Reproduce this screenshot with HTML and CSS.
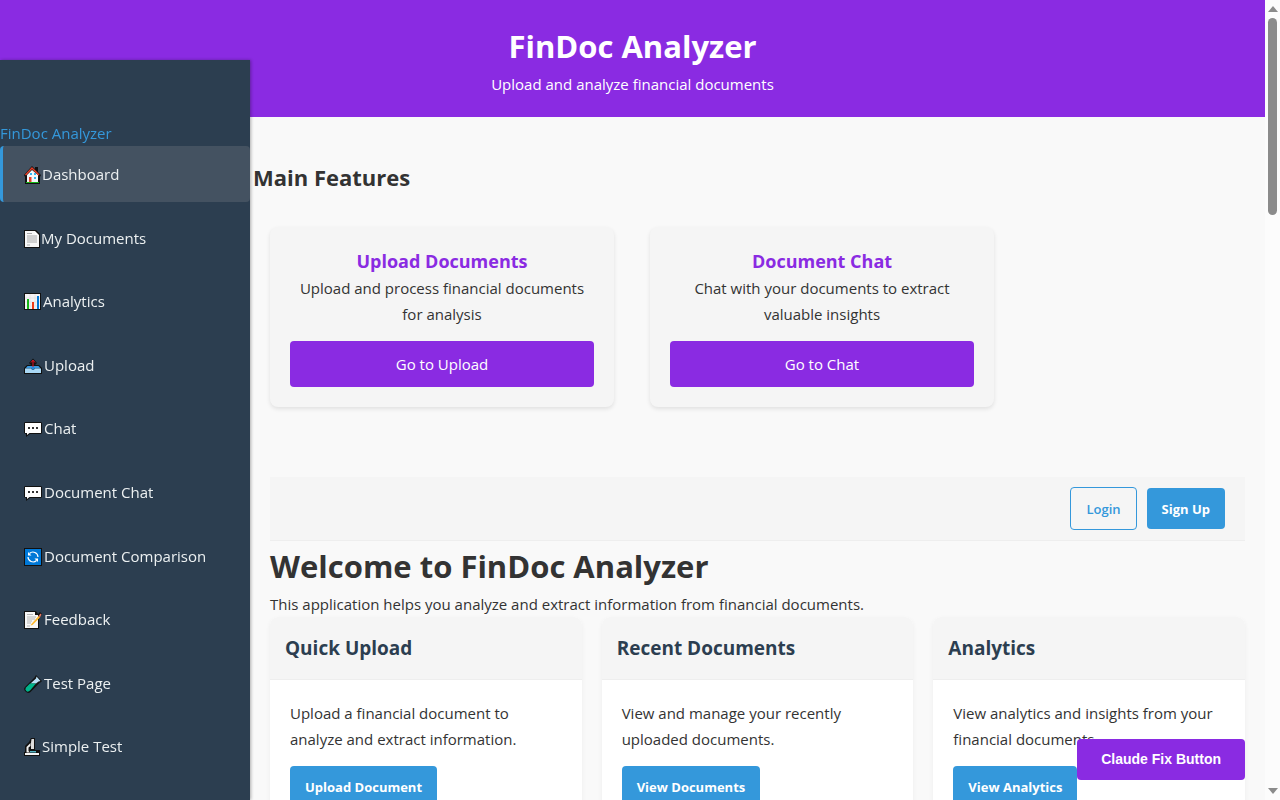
FILE: index.html
```html
<!DOCTYPE html>
<html lang="en">
<head>
<meta charset="utf-8">
<title>FinDoc Analyzer</title>
<link rel="stylesheet" href="styles.css">
</head>
<body>
<div class="page">
  <header class="banner">
    <h1 class="banner-title">FinDoc Analyzer</h1>
    <p class="banner-text">Upload and analyze financial documents</p>
  </header>

  <main class="content">
    <section class="features">
      <h2 class="features-title">Main Features</h2>
      <div class="feature-grid">
        <article class="feature">
          <h3 class="feature-title">Upload Documents</h3>
          <p class="text">Upload and process financial documents for analysis</p>
          <a class="feature-link" href="#upload">Go to Upload</a>
        </article>
        <article class="feature">
          <h3 class="feature-title">Document Chat</h3>
          <p class="text">Chat with your documents to extract valuable insights</p>
          <a class="feature-link" href="#chat">Go to Chat</a>
        </article>
      </div>
    </section>

    <div class="auth">
      <button class="btn btn-outline" type="button">Login</button>
      <button class="btn" type="button">Sign Up</button>
    </div>

    <h1 class="welcome-title">Welcome to FinDoc Analyzer</h1>
    <p class="text">This application helps you analyze and extract information from financial documents.</p>

    <div class="cards">
      <article class="card">
        <h2 class="card-title">Quick Upload</h2>
        <div class="card-body">
          <p class="text">Upload a financial document to analyze and extract information.</p>
          <button class="btn card-btn" type="button">Upload Document</button>
        </div>
      </article>
      <article class="card">
        <h2 class="card-title">Recent Documents</h2>
        <div class="card-body">
          <p class="text">View and manage your recently uploaded documents.</p>
          <button class="btn card-btn" type="button">View Documents</button>
        </div>
      </article>
      <article class="card">
        <h2 class="card-title">Analytics</h2>
        <div class="card-body">
          <p class="text">View analytics and insights from your financial documents.</p>
          <button class="btn card-btn" type="button">View Analytics</button>
        </div>
      </article>
    </div>
  </main>
</div>

<aside class="sidebar">
  <a class="brand" href="#home">FinDoc Analyzer</a>
  <nav>
    <ul class="nav">
      <li class="nav-item"><a class="nav-link active" href="#dashboard"><svg class="icon" width="18" height="18" viewBox="0 0 18 18"><path d="M0 9 8 0l3 3V1h3v5l3 3-1 2v7H1v-7z" fill="#111"/><path d="M3 9l5-5 6 5v7H3z" fill="#f4f7fa"/><path d="M1.500 9 8 2l7 7" fill="none" stroke="#e8402a" stroke-width="1.500"/><path d="M5 11h2.500v5H5z" fill="#e8402a"/><path d="M6 7h2v2H6zM10 7h2v2h-2zM10 11h2v2h-2z" fill="#35b5f0"/><path d="M2 16h13v1H2z" fill="#16b616"/></svg><span class="label">Dashboard</span></a></li>
      <li class="nav-item"><a class="nav-link" href="#documents"><svg class="icon" width="17" height="18" viewBox="0 0 17 18"><path d="M0 0h12l4 4v14H0z" fill="#111"/><path d="M1 1h10v4h4v12H1z" fill="#f7f7f7"/><path d="M11 1l4 4h-4z" fill="#fff"/><path d="M3 3.500h5M3 6h10M3 8h10M3 10h10M3 12h10M3 15h3" stroke="#aaa"/></svg><span class="label">My Documents</span></a></li>
      <li class="nav-item"><a class="nav-link" href="#analytics"><svg class="icon" width="19" height="18" viewBox="0 0 19 18"><path d="M0 0h17v17H0z" fill="#111"/><path d="M1 1h15v15H1z" fill="#f4f2f5"/><path d="M1 5h15M1 9h15M1 13h15M6 1v15M11 1v15" stroke="#dedede" stroke-width=".6"/><path d="M3 6h2v10H3z" fill="#16b616"/><path d="M8 9h2v7H8z" fill="#f03a17"/><path d="M13 3h2v13h-2z" fill="#0078d7"/></svg><span class="label">Analytics</span></a></li>
      <li class="nav-item"><a class="nav-link" href="#upload"><svg class="icon" width="20" height="18" viewBox="0 0 20 18"><path d="M3 8h12l3 3v6H0v-6z" fill="#111"/><path d="M9 1.500 5 6l2 2h4l2-2z" fill="#111"/><path d="M3.500 9h11l2 2.500H1.500z" fill="#3a96dd"/><path d="M1 11.500h6q2 2.500 4 0h6V16H1z" fill="#a9d8f5"/><path d="M7.500 10h3v2q-1.500 1-3 0z" fill="#2089df"/><path d="M9 3v7M7 5.500 9 3.200l2 2.300" fill="none" stroke="#e81224"/></svg><span class="label">Upload</span></a></li>
      <li class="nav-item"><a class="nav-link" href="#chat"><svg class="icon" width="20" height="18" viewBox="0 0 20 18"><path d="M1 2h16l1 1v10l-1 1H6l-4 3v-3l-2-1V3z" fill="#111"/><path d="M1 3h16v10H5.500L3 15v-2H1z" fill="#fff"/><path d="M4 7h2v2H4zM8 7h2v2H8zM12 7h2v2h-2z" fill="#333"/></svg><span class="label">Chat</span></a></li>
      <li class="nav-item"><a class="nav-link" href="#document-chat"><svg class="icon" width="20" height="18" viewBox="0 0 20 18"><path d="M1 2h16l1 1v10l-1 1H6l-4 3v-3l-2-1V3z" fill="#111"/><path d="M1 3h16v10H5.500L3 15v-2H1z" fill="#fff"/><path d="M4 7h2v2H4zM8 7h2v2H8zM12 7h2v2h-2z" fill="#333"/></svg><span class="label">Document Chat</span></a></li>
      <li class="nav-item"><a class="nav-link" href="#comparison"><svg class="icon" width="20" height="18" viewBox="0 0 20 18"><path d="M0 0h18v18H0z" fill="#111"/><path d="M1 1h16v16H1z" fill="#0078d7"/><path d="M5.500 5.500A5 5 0 0 1 14 9M12.500 12.500A5 5 0 0 1 4 9" fill="none" stroke="#fff" stroke-width="1.200"/><path d="M4 4v3.500h3.500zM14 14v-3.500h-3.500z" fill="#fff"/></svg><span class="label">Document Comparison</span></a></li>
      <li class="nav-item"><a class="nav-link" href="#feedback"><svg class="icon" width="20" height="18" viewBox="0 0 20 18"><path d="M0 0h12l2 3 2-2 2 2-3 5v10H0z" fill="#111"/><path d="M1 1h10v3h3v13H1z" fill="#f7f7f7"/><path d="M3 3.500h6M3 6h9M3 8h8M3 10h5M3 12h4M3 15h3" stroke="#b5b5b5"/><path d="M7 13.500 14.500 5l1.500 1.500-7.500 7.500-2 .5z" fill="#ffb92e"/><path d="M14.500 5l2-2.500 1 1L16 6.500z" fill="#e9785e"/></svg><span class="label">Feedback</span></a></li>
      <li class="nav-item"><a class="nav-link" href="#test"><svg class="icon" width="20" height="18" viewBox="0 0 20 18"><path d="M12 0l6 6-1.500 1.500H16L6.500 17Q4 19 1.500 16.500T1 12l9.500-9.500z" fill="#111"/><path d="M12.500 1.500l4 4.500-2 .5-2.500 2H6.500L12 3.500z" fill="#b9dff6"/><path d="M6 8.500h6L6 15.500Q4 17.500 2.300 16T2 12.500z" fill="#00b58c"/></svg><span class="label">Test Page</span></a></li>
      <li class="nav-item"><a class="nav-link" href="#simple"><svg class="icon" width="18" height="18" viewBox="0 0 18 18"><path d="M7 0h4v12h5v6H0v-4h1V8l4-4z" fill="#111"/><path d="M7.500 1H10v10H7V4.500z" fill="#dedede"/><path d="M6.500 5 2.500 9v5.500H6L4.500 13V9.500L6.500 8z" fill="#eee"/><path d="M6 13h6v1.500H6z" fill="#53b5c3"/><path d="M1 15h14v2H1z" fill="#f4f4f4"/></svg><span class="label">Simple Test</span></a></li>
    </ul>
  </nav>
</aside>

<button class="fix-btn" type="button">Claude Fix Button</button>

<div class="scrollbar" aria-hidden="true">
  <span class="arrow arrow-up"></span>
  <span class="thumb"></span>
  <span class="arrow arrow-down"></span>
</div>
</body>
</html>
```
FILE: styles.css
```css
* {
  box-sizing: border-box;
  margin: 0;
  padding: 0;
}

html {
  height: 100%;
  overflow: hidden;
}

body {
  height: 100%;
  overflow: hidden;
  background: #f9f9f9;
  color: #333;
  font-family: "Open Sans", "Noto Sans", sans-serif;
  font-size: 15px;
  line-height: 26px;
}

a {
  text-decoration: none;
}

.page {
  margin-right: 15px;
}

.banner {
  padding: 20px;
  background: #8a2be2;
  color: #fff;
  text-align: center;
}

.banner-title {
  padding-top: 2px;
  font-size: 31px;
  line-height: 49px;
}

.content {
  padding: 40px 20px 20px 270px;
}

.features {
  padding-bottom: 70px;
}

.features-title {
  margin-left: -17px;
  font-size: 22px;
  line-height: 40px;
}

.feature-grid {
  display: grid;
  grid-template-columns: 1fr 1fr;
  gap: 36px;
  max-width: 724px;
  margin-top: 30px;
}

.feature {
  padding: 20px;
  border-radius: 8px;
  background: #f5f5f5;
  box-shadow: 0 2px 4px rgba(0, 0, 0, 0.1);
  text-align: center;
}

.feature-title {
  color: #8a2be2;
  font-size: 18px;
  line-height: 28px;
}

.feature-link {
  display: block;
  margin-top: 14px;
  padding: 10px 20px;
  border-radius: 4px;
  background: #8a2be2;
  color: #fff;
}

.auth {
  display: flex;
  justify-content: flex-end;
  align-items: center;
  gap: 10px;
  padding: 10px 20px;
  border-bottom: 1px solid #eee;
  background: #f5f5f5;
}

.btn {
  padding: 11px 15px 10px;
  border: 0;
  border-radius: 4px;
  background: #3498db;
  color: #fff;
  font-family: inherit;
  font-size: 13px;
  font-weight: 700;
  line-height: 20px;
}

.btn-outline {
  border: 1px solid #3498db;
  background: transparent;
  color: #3498db;
  font-weight: 600;
}

.welcome-title {
  font-size: 31px;
  line-height: 50px;
}

.cards {
  display: grid;
  grid-template-columns: repeat(3, 1fr);
  gap: 20px;
}

.card {
  overflow: hidden;
  border-radius: 8px;
  background: #fff;
  box-shadow: 0 2px 5px rgba(0, 0, 0, 0.05);
}

.card-title {
  padding: 16px 15px 15px;
  border-bottom: 1px solid #eee;
  background: #f5f5f5;
  color: #2c3e50;
  font-size: 19px;
  line-height: 31px;
}

.card-body {
  padding: 20px;
}

.card-btn {
  margin-top: 14px;
}

.sidebar {
  position: fixed;
  top: 60px;
  bottom: 0;
  left: 0;
  width: 250px;
  padding-top: 60px;
  overflow: hidden;
  background: #2c3e50;
  box-shadow: 1px 0 3px rgba(0, 0, 0, 0.3);
}

.brand {
  display: block;
  color: #3498db;
}

.nav {
  list-style: none;
}

.nav-item {
  margin-bottom: 8px;
}

.nav-link {
  display: block;
  padding: 16px 20px 14px;
  border-left: 3px solid transparent;
  border-radius: 4px;
  color: #ecf0f1;
  font-size: 16px;
  line-height: 1.6;
}

.nav-link.active {
  border-left-color: #3498db;
  background: #445261;
}

.label {
  font-size: 15px;
}

.icon {
  margin-left: 1px;
  vertical-align: -4px;
}

.fix-btn {
  position: fixed;
  right: 35px;
  bottom: 20px;
  padding: 12px 24px;
  border: 0;
  border-radius: 4px;
  background: #8a2be2;
  color: #fff;
  font-family: "Liberation Sans", Arial, sans-serif;
  font-size: 14px;
  font-weight: bold;
  line-height: 17px;
}

.scrollbar {
  position: fixed;
  top: 0;
  right: 0;
  bottom: 0;
  display: flex;
  flex-direction: column;
  align-items: center;
  width: 15px;
  padding: 6px 0;
  background: #fcfcfc;
}

.arrow {
  border: 5px solid transparent;
}

.arrow-up {
  border-top: 0;
  border-bottom: 6px solid #8b8b8b;
}

.arrow-down {
  margin-top: auto;
  border-bottom: 0;
  border-top: 6px solid #8b8b8b;
}

.thumb {
  width: 9px;
  height: 25%;
  margin-top: 6px;
  border-radius: 5px;
  background: #8b8b8b;
}
```
